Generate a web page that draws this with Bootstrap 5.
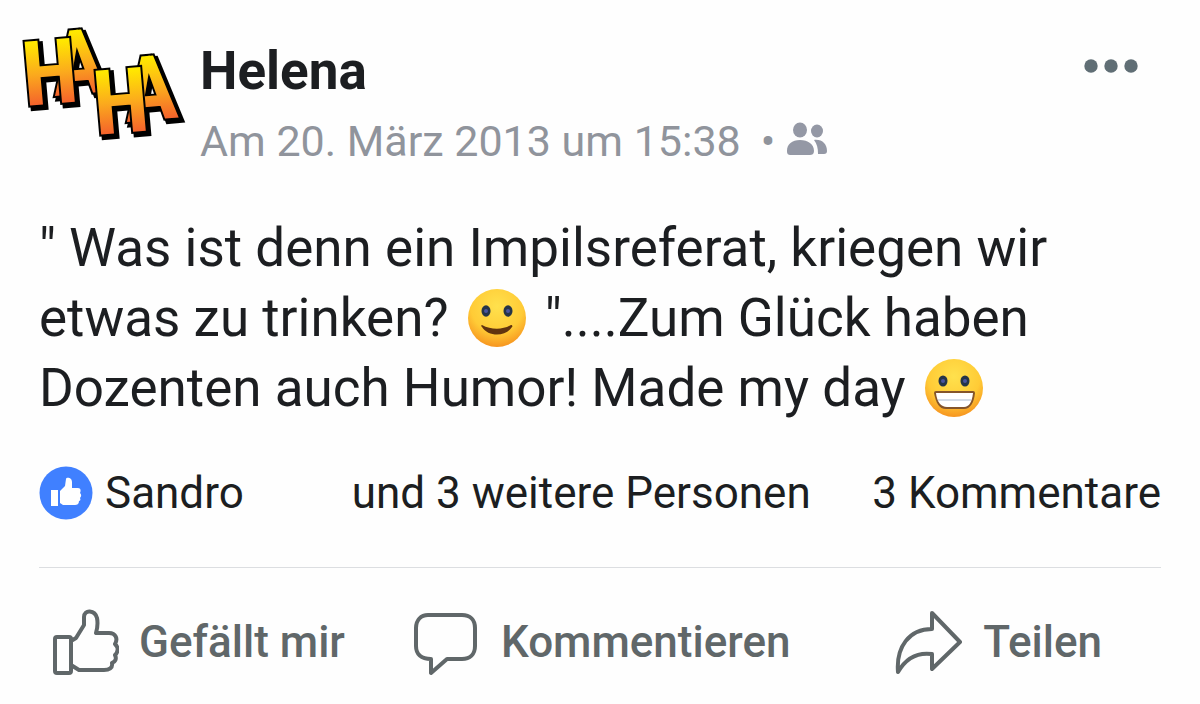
<!DOCTYPE html>
<html lang="de">
<head>
<meta charset="utf-8">
<meta name="viewport" content="width=device-width, initial-scale=1">
<title>Beitrag von Helena</title>
<link href="https://cdn.jsdelivr.net/npm/bootstrap@5.3.0/dist/css/bootstrap.min.css" rel="stylesheet">
<style>
body{font-family:Roboto,sans-serif;color:#1c1e21;background:#fefefe}
.post{padding:36px 39px 24px}
.post-head{margin-left:-19px}
.avatar{width:170px;height:132px;margin-top:-16px;margin-right:10px;flex:none;overflow:visible}
.logo-text{font-family:"Liberation Sans Narrow","Roboto Condensed","Open Sans Condensed","Noto Sans Condensed",Roboto,sans-serif;font-weight:700;font-size:90px}
.name,.meta,.post-text,.stats{line-height:70px}
.name{font-size:53px;font-weight:700;margin:0}
.meta{font-size:43px;color:#90949c}
.dot{margin-left:20px}
.more{margin:20px 22px 0 0;line-height:0}
.post-text{font-size:53px;margin:37px 0 0}
.emoji{width:60px;height:60px;margin:0 5px;vertical-align:-12px}
.stats{font-size:44px;margin-top:35px;color:#1c1e21}
.stats a{color:inherit}
.others{margin-left:108px}
.actions{margin-top:39px;border-top:1px solid #dcdee1;padding:39px 59px 0 12px;column-gap:68px}
.act{font-size:44px;font-weight:500;line-height:70px;color:#606769;column-gap:20px}
.act svg{width:68px;height:70px;fill:none;stroke:#606769;stroke-width:4;stroke-linejoin:round}
</style>
</head>
<body>
<article class="post">
  <header class="post-head d-flex align-items-start">
    <svg class="avatar" viewBox="0 0 170 132" role="img" aria-label="HAHA">
      <defs>
        <linearGradient id="fire" x1="0" y1="0" x2="0" y2="1"><stop offset=".2" stop-color="#ffe800"/><stop offset=".5" stop-color="#fbaa1d"/><stop offset=".8" stop-color="#f4602c"/></linearGradient>
      </defs>
      <g class="logo-text" stroke-linejoin="miter" paint-order="stroke">
        <g fill="#000" stroke="#000" stroke-width="5">
          <text transform="translate(8 89) rotate(-5)">H</text><text transform="translate(37 79) rotate(-5)">A</text>
          <text transform="translate(79 118) rotate(-5)">H</text><text transform="translate(109 105) rotate(-5)">A</text>
        </g>
        <g fill="url(#fire)" stroke="#000" stroke-width="4">
          <text transform="translate(34 76) rotate(-5)">A</text><text transform="translate(5 86) rotate(-5)">H</text>
          <text transform="translate(106 102) rotate(-5)">A</text><text transform="translate(76 115) rotate(-5)">H</text>
        </g>
      </g>
    </svg>
    <div class="flex-grow-1">
      <h1 class="name">Helena</h1>
      <div class="meta d-flex align-items-center">
        <span>Am 20. März 2013 um 15:38</span><span class="dot">•</span>
        <svg class="ms-2" width="48" height="44" viewBox="0 0 48 44" fill="#9498a5" role="img" aria-label="Freunde"><ellipse cx="17" cy="11" rx="7" ry="7.5"/><ellipse cx="34" cy="12" rx="6" ry="6.5"/><path d="M4 32C4 25 9 21 17 21s14 4 14 11c0 3-2 4-4 4H8c-3 0-4-1-4-4zM31 21c8-1 13 4 13 11 0 2-1 3-3 3h-6c0-6-1-10-4-14z"/></svg>
      </div>
    </div>
    <button class="more btn p-0 border-0" type="button" aria-label="Mehr">
      <svg width="56" height="20" fill="#606e75"><circle cx="8" cy="10" r="6.7"/><circle cx="28" cy="10" r="6.7"/><circle cx="48" cy="10" r="6.7"/></svg>
    </button>
  </header>

  <p class="post-text">" Was ist denn ein Impilsreferat, kriegen wir<br>etwas zu trinken?
    <svg class="emoji" viewBox="0 0 60 60" role="img" aria-label="Lächeln">
      <defs><radialGradient id="skin" cx=".5" cy=".3" r=".75"><stop stop-color="#ffe14d"/><stop offset=".6" stop-color="#ffcb36"/><stop offset="1" stop-color="#f58a1b"/></radialGradient></defs>
      <circle cx="30" cy="30" r="29" fill="url(#skin)"/>
      <g fill="#253448"><ellipse cx="19" cy="23" rx="4.500" ry="5.800"/><ellipse cx="41" cy="23" rx="4.500" ry="5.800"/></g>
      <g fill="#4953a0"><circle cx="19" cy="23" r="2"/><circle cx="41" cy="23" r="2"/></g>
      <path d="M15 37c9 5 21 5 29 0 1 0 2 1 1 2-6 10-24 10-30 0-1-1-1-2 0-2z" fill="#61330f"/>
    </svg>
    "....Zum Glück haben<br>Dozenten auch Humor! Made my day
    <svg class="emoji" viewBox="0 0 60 60" role="img" aria-label="Grinsen">
      <circle cx="30" cy="30" r="29" fill="url(#skin)"/>
      <g fill="#253448"><ellipse cx="19" cy="23" rx="4.500" ry="5.500"/><ellipse cx="41" cy="23" rx="4.500" ry="5.500"/></g>
      <g fill="#4953a0"><circle cx="19" cy="23" r="2"/><circle cx="41" cy="23" r="2"/></g>
      <path d="M12 33h37q2 0 2 2c-1 10-5 16-11 16H22c-7 0-10-6-12-16q0-2 2-2z" fill="#85552a"/>
      <path d="M12 35h37c-1 9-4 14-9 14H23c-6 0-10-5-11-14z" fill="#fff"/><path d="M14 42h33" stroke="#c6d0df" stroke-width="1.500"/>
    </svg></p>

  <div class="stats d-flex align-items-center text-nowrap">
    <svg class="flex-shrink-0" width="54" height="54" viewBox="0 0 54 54" role="img" aria-label="Gefällt mir"><circle cx="27" cy="27" r="26.500" fill="#4080ff"/><path fill="#fff" d="M12 24h7v16h-7zM21 25l5-5 1-7c0-2 6-2 6 3v6h6c3 0 3 3 2 5 2 2 1 4 0 5 1 2 0 3-1 3 0 3-2 4-4 4H24l-3-2z"/></svg>
    <a href="#" class="text-decoration-none ms-2 ps-1">Sandro</a>
    <a href="#" class="others text-decoration-none">und 3 weitere Personen</a>
    <a href="#" class="text-decoration-none ms-auto">3 Kommentare</a>
  </div>

  <div class="actions d-flex">
    <button type="button" class="act btn p-0 border-0 d-flex align-items-center text-nowrap">
      <svg viewBox="0 0 68 70" aria-hidden="true"><path d="M4 32q0-2 2-2h12q2 0 2 2v32q0 2-2 2H6q-2 0-2-2zM20 34l5-3 8-13V10c0-8 11-7 13 1 1 5 1 8-1 15h13c7 0 9 6 6 11 4 4 3 8 0 11 2 4 0 7-3 8 1 5-3 7-8 7H28l-8-5"/></svg>
      <span>Gefällt mir</span></button>
    <button type="button" class="act btn p-0 border-0 d-flex align-items-center text-nowrap">
      <svg viewBox="0 0 68 70" aria-hidden="true"><path d="M15 8h34c8 0 13 5 13 13v18c0 8-5 13-13 13H34L18 66V52c-10 0-15-5-15-13V21C3 13 8 8 15 8z"/></svg>
      <span>Kommentieren</span></button>
    <button type="button" class="act btn p-0 border-0 d-flex align-items-center text-nowrap ms-auto">
      <svg viewBox="0 0 68 70" aria-hidden="true"><path d="M37 6l28 29-28 27V47C22 45 11 51 3 65 1 40 14 22 37 22z"/></svg>
      <span>Teilen</span></button>
  </div>
</article>
<script src="https://cdn.jsdelivr.net/npm/bootstrap@5.3.0/dist/js/bootstrap.bundle.min.js"></script>
</body>
</html>
